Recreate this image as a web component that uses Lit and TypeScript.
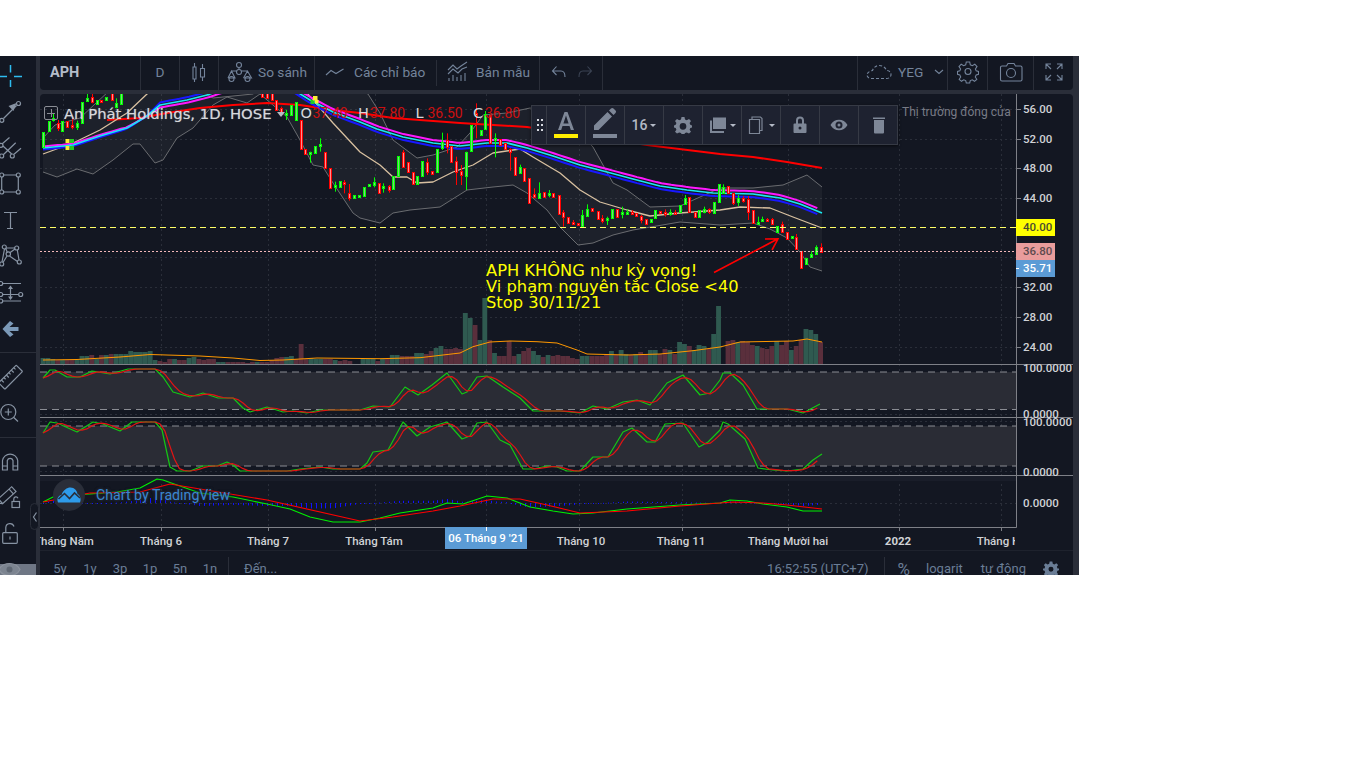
import { LitElement, css, html, svg } from "lit";
import { customElement } from "lit/decorators.js";

type Pt = [number, number];

// all chart data is in page pixels, the svg viewBox maps them 1:1
const STEP = 4.87;

// candles as colour + x,top,bottom[,wickTop,wickBottom], measured on 3x crops
const CANDLE_GROUPS: { ox: number; oy: number; rows: string }[] = [
  {
    ox: 0,
    oy: 50,
    rows:
      "g130,245,290 g146,212,242 g160,204,207,190,215 r175,218,235,210,243 g187,212,242 r202,212,230 r217,225,232,205,238 g232,220,232,212,240 g247,155,218 g262,145,152,132,155 r277,142,155,132,160 g290,150,162 r304,149,152 g319,140,150 r335,125,150 g349,158,172,145,175 g364,125,162 r785,120,140 r800,125,145 r815,130,150 r829,150,180 r843,175,185,170,195 g859,190,195,180,210 g873,165,195 g889,155,210 r904,210,298 r916,298,312 g931,306,310,305,338 g946,287,308 g961,283,286,265,305 r976,307,355 r991,355,415 g1006,406,410,395,425 g1019,393,410 r1033,395,403,390,430 r1048,428,445,402,452 g1063,435,445 g1077,435,440",
  },
  {
    ox: 360,
    oy: 50,
    rows:
      "g13,410,437 g27,403,407 g41,395,405,382,412 r56,400,428 g70,408,412,400,428 r86,408,420,405,428 g100,377,417 g115,317,377 r130,307,350,300,352 r143,335,365 r158,365,402 g172,378,403 g187,333,378 r202,335,365,325,375 r217,362,372 g232,298,367 g245,275,293,248,300 r260,270,290,250,310 r274,288,335 r289,333,365,320,405 r304,362,375,345,405 g319,305,377,305,420 g334,225,302 r349,190,192,160,265 g362,240,255 g376,193,238,183,240 r391,195,278 g406,263,270,250,322 r421,268,285 r436,278,298 r451,297,305,295,362 r464,320,375 g479,352,368,344,370 r493,355,392 r508,385,460 r522,432,442,415,445 g538,430,443,397,445 r553,427,442 g566,430,436,420,442 r580,430,440 r596,435,492 r610,485,500,480,530 r625,500,518 r640,516,520,510,525 r655,518,525 g667,495,528,480,530 g682,478,497,463,500 r697,475,482 r713,482,508 r727,503,512,495,520 g742,505,509,500,525 g757,478,503 r770,477,502 g785,485,489,470,505 g800,485,489,478,495 r815,485,489,480,495 r829,490,497 r844,497,510,495,520 r859,507,522 g872,507,517 g886,480,505 r901,482,490 r916,485,489,478,500 g931,485,489,478,497 r946,485,489,480,493 g961,465,485 g974,445,463,435,465 r988,442,487 r1004,487,500 g1018,480,500 g1033,478,487,470,490 r1048,477,487,475,492 g1063,455,490 g1077,402,455",
  },
  {
    ox: 720,
    oy: 50,
    rows:
      "g10,410,428,403,430 r25,408,430 r40,430,458,430,465 g55,443,457,435,468 r70,443,453,438,458 r85,448,485,438,510 r100,480,518 g113,515,519,500,525 g127,508,512,500,514 r142,508,512,504,516 r157,508,522,504,524 g172,527,545 r187,522,545,515,548",
  },
  {
    ox: 720,
    oy: 230,
    rows:
      "r202,5,28 g215,18,25 r229,20,58,12,60 r244,62,115 g259,85,103 g274,72,82,64,84 g289,52,72,46,74 r304,50,65,40,68",
  },
];

// volume heights, negative is a down day
const VOLUME_GROUPS: { start: number; bars: number[] }[] = [
  {
    start: 43,
    bars: [6, 6, 5, -4, 4, -4, -4, 4, 8, 8, -9, 5, -9, 9, -10, 10, 10, 10, 13, 12, 12, 12, 13, 4, -3, -2, -5, 5, -4, -4, 6, 7, -5, -4, -5, -5, 2, 2, -2, -2, -2, -2, -1, -2, 2, -2, -2, -4, -6, -7, 7, 8, -5, -20, -5, 6, 5, 5, -5, -5, 4, -3, -4, -3],
  },
  {
    start: 363,
    bars: [5, 5, 5, -3, 5, -5, 9, 9, -8, -8, -8, 11, 11, -10, -13, 16, 18, -15, -15, -16, -15, 51, 46, -39, 24, 66, -24, 11, -8, -8, -23, -8, 10, -13, -16, 13, 9, -7, 9, -8, -9, -8, -8, -6, -5, 8, 8, -8, -8, -8, -10, 13, -9, 14, 10, -9, 10, -12, -10, 14, 14, -10, -15, 14, -10, 22, 20, -18, 14, 19, 18, -15, 30, 58],
  },
  {
    start: 728,
    bars: [-23, -24, 22, -23, -22, -19, 18, -16, -15, -18, 23, -19, -23, 14, -18, -24, 35, 34, 30, -22],
  },
];

const RIBBON: Pt[] = [[43, 148], [73, 145], [100, 136], [127, 128], [147, 116], [160, 105], [187, 100], [207, 95], [240, 84], [280, 84], [297, 92], [310, 100], [333, 112], [360, 122], [377, 129], [403, 137], [433, 143], [460, 146], [487, 143], [507, 143], [527, 148], [553, 156], [580, 165], [607, 172], [633, 179], [660, 186], [687, 190], [713, 193], [753, 194], [780, 198], [800, 204], [822, 213]];
const RIBBON_SPREAD: Pt[] = [[43, 1.5], [120, 1], [147, 0], [160, -2.5], [230, -3], [270, 0], [305, 3], [822, 3]];
const LONG_MA: Pt[] = [[107, 120], [140, 118], [167, 113], [200, 108], [233, 105], [267, 103], [300, 105], [333, 110], [360, 113], [393, 118], [460, 123], [527, 127], [647, 145], [720, 154], [753, 157], [787, 162], [822, 168]];
const BASIS: Pt[] = [[43, 154], [73, 143], [100, 130], [127, 113], [147, 94], [165, 80], [290, 80], [307, 93], [333, 123], [360, 152], [380, 165], [393, 177], [407, 177], [417, 183], [433, 182], [453, 172], [473, 165], [493, 153], [520, 149], [533, 157], [560, 173], [580, 190], [600, 202], [627, 210], [650, 216], [680, 213], [720, 210], [740, 207], [770, 208], [793, 217], [822, 228]];
const BB_UP: Pt[] = [[43, 138], [55, 125], [80, 118], [110, 90], [150, 60], [213, 98], [253, 94], [300, 60], [368, 94], [380, 113], [393, 140], [417, 158], [433, 155], [457, 147], [470, 133], [483, 115], [507, 113], [530, 108], [560, 112], [593, 147], [613, 183], [627, 190], [650, 207], [680, 206], [720, 188], [753, 188], [783, 185], [807, 175], [822, 187]];
const BB_LOW: Pt[] = [[43, 172], [57, 177], [77, 169], [93, 174], [113, 160], [133, 144], [140, 144], [155, 163], [163, 160], [177, 138], [193, 128], [213, 105], [227, 97], [247, 103], [260, 94], [287, 117], [300, 140], [313, 165], [323, 167], [333, 183], [353, 213], [360, 218], [380, 223], [393, 213], [410, 210], [440, 207], [467, 190], [493, 187], [513, 185], [527, 193], [547, 210], [560, 227], [578, 245], [593, 243], [613, 235], [633, 230], [680, 222], [720, 225], [753, 223], [770, 229], [787, 238], [800, 252], [810, 267], [822, 271]];
const VOL_MA: Pt[] = [[43, 360], [77, 359.5], [120, 357], [150, 354.5], [200, 356], [233, 358], [260, 360.5], [283, 360], [317, 358], [380, 358.7], [420, 357.7], [460, 353], [473, 346.7], [490, 342], [510, 341], [537, 341.7], [557, 343], [577, 350], [587, 354], [627, 355], [660, 354], [693, 350.7], [720, 347], [740, 342], [793, 341], [807, 339], [822, 342]];
const STOCH_A: Pt[] = [[43, 378], [50, 370], [55, 370], [67, 377], [80, 377], [92, 371], [110, 374], [128, 369], [155, 369], [163, 377], [173, 392], [190, 397], [203, 393], [218, 398], [233, 398], [243, 408], [250, 412], [267, 407], [283, 412], [293, 411], [307, 413], [320, 410], [360, 410], [373, 406], [390, 407], [405, 387], [418, 395], [432, 385], [447, 373], [462, 394], [467, 392], [477, 377], [487, 376], [503, 387], [520, 398], [533, 411], [560, 411], [580, 413], [593, 406], [607, 409], [623, 402], [637, 400], [650, 405], [667, 383], [683, 375], [700, 395], [710, 393], [720, 380], [723, 373], [730, 373], [743, 385], [757, 409], [787, 409], [803, 413], [820, 404]];
const STOCH_B: Pt[] = [[43, 433], [50, 422], [57, 423], [77, 432], [93, 422], [103, 424], [120, 431], [132, 422], [155, 422], [162, 430], [170, 467], [177, 471], [190, 471], [203, 466], [217, 466], [227, 462], [233, 465], [240, 471], [267, 471], [287, 471], [300, 469], [320, 467], [333, 469], [360, 469], [367, 463], [373, 452], [388, 450], [403, 422], [417, 436], [430, 427], [447, 422], [462, 439], [470, 436], [477, 423], [487, 422], [500, 440], [510, 445], [523, 469], [533, 469], [547, 466], [557, 467], [567, 471], [580, 471], [593, 457], [608, 457], [623, 432], [632, 428], [647, 442], [655, 442], [665, 424], [683, 423], [699, 447], [708, 442], [720, 430], [723, 422], [728, 424], [745, 439], [758, 468], [773, 470], [787, 471], [803, 469], [813, 460], [822, 454]];
const MACD: Pt[] = [[43, 502], [53, 497], [67, 495], [90, 494], [117, 492], [140, 488], [157, 479], [163, 480], [177, 485], [200, 493], [233, 497], [267, 504], [290, 509], [310, 517], [333, 522], [360, 522], [380, 518], [400, 513], [433, 508], [447, 503], [463, 504], [487, 496], [507, 498], [530, 507], [553, 511], [573, 514], [593, 513], [627, 509], [680, 505], [720, 503], [730, 500], [747, 501], [763, 504], [787, 507], [803, 511], [822, 511]];
const SIGNAL: Pt[] = [[43, 502], [90, 493], [140, 492], [170, 484], [200, 489], [267, 500], [360, 521], [393, 517], [433, 511], [460, 506], [493, 499], [520, 499], [547, 505], [580, 513], [627, 511], [680, 506], [720, 503], [733, 502], [763, 503], [787, 505], [822, 509]];

const line = (pts: Pt[]) => pts.map(([x, y]) => `${x.toFixed(1)},${y.toFixed(1)}`).join(" ");

const at = (pts: Pt[], x: number) => {
  if (x <= pts[0][0]) return pts[0][1];
  for (let i = 1; i < pts.length; i++) {
    if (x <= pts[i][0]) {
      const [x0, y0] = pts[i - 1];
      const [x1, y1] = pts[i];
      return y0 + ((y1 - y0) * (x - x0)) / (x1 - x0);
    }
  }
  return pts[pts.length - 1][1];
};

const samples = () => {
  const xs: number[] = [];
  for (let x = 43; x <= 822; x += STEP) xs.push(x);
  return xs;
};

// %D line of the stochastics: three bar average of %K
const lagged = (pts: Pt[]): Pt[] =>
  samples().map((x) => [x, (at(pts, x) + at(pts, x - STEP) + at(pts, x - 2 * STEP)) / 3]);

const ribbon = (sign: number): Pt[] => {
  const xs = samples();
  return xs.map((x) => [x, at(RIBBON, x) + sign * at(RIBBON_SPREAD, x)]);
};

const candles = () =>
  CANDLE_GROUPS.flatMap((group) =>
    group.rows.split(" ").map((row) => {
      const up = row[0] === "g";
      const n = row.slice(1).split(",").map(Number);
      const x = Math.round(group.ox + n[0] / 3) + 0.5;
      const top = Math.round(group.oy + n[1] / 3) + 0.5;
      const bottom = Math.round(group.oy + n[2] / 3) + 0.5;
      const wickTop = n.length > 3 ? group.oy + n[3] / 3 : top;
      const wickBottom = n.length > 3 ? group.oy + n[4] / 3 : bottom;
      const colour = up ? "#00ff00" : "#ff0000";
      return svg`<line x1=${x} x2=${x} y1=${wickTop} y2=${wickBottom} stroke=${colour}></line>
        <rect x=${x - 1} y=${top} width="2" height=${Math.max(bottom - top, 2)}
          fill=${up ? "#7fd07f" : "#ff8f8f"} stroke=${colour}></rect>`;
    })
  );

const volumes = () =>
  VOLUME_GROUPS.flatMap((group) =>
    group.bars.map((h, i) => {
      const size = Math.abs(h);
      return svg`<rect x=${group.start + i * STEP - 2.4} y=${364 - size} width=${STEP} height=${size}
        fill=${h > 0 ? "#2f5a50" : "#5a2f3c"}></rect>`;
    })
  );

const histogram = () =>
  samples().map((x) => {
    const h = (at(SIGNAL, x) - at(MACD, x)) * 0.75;
    const y = h > 0 ? 503 - h : 503;
    return svg`<rect x=${Math.round(x)} y=${y} width="1" height=${Math.max(Math.abs(h), 1)} fill="#1010ff"></rect>`;
  });

const V_GRID = [63, 161, 268, 375, 486, 579, 682, 788, 899, 1001];
const H_GRID = [109, 139, 168, 198, 257, 287, 317, 347, 414, 421, 471, 503];
const PRICES: [string, number][] = [["56.00", 109], ["52.00", 139], ["48.00", 168], ["44.00", 198], ["32.00", 287], ["28.00", 317], ["24.00", 347]];
const OSC_LABELS: [string, number][] = [["100.0000", 368], ["0.0000", 414], ["100.0000", 422], ["0.0000", 472], ["0.0000", 503]];
const MONTHS: [string, number][] = [["Tháng Năm", 64], ["Tháng 6", 161], ["Tháng 7", 268], ["Tháng Tám", 374], ["Tháng 10", 581], ["Tháng 11", 681], ["Tháng Mười hai", 788], ["2022", 898], ["Tháng Hai", 1003]];

@customElement("app-root")
export class AppRoot extends LitElement {
  private sideTool(body: unknown) {
    return html`<div class="tool"><svg width="36" height="36" viewBox="0 0 36 36">${body}</svg></div>`;
  }

  private renderSide() {
    return html`
      <div class="side">
        <div class="group first">
          ${this.sideTool(svg`<path class="cyan" d="M0 18.5h7M14 18.5h8M10.5 7v7.5M10.5 22v7"></path>`)}
          ${this.sideTool(svg`<path d="M3.5 24.5 16.5 11.5"></path><circle cx="18.5" cy="9.5" r="2"></circle><circle cx="1.8" cy="26.3" r="2"></circle><path class="solid" d="M16.5 9 8.5 12 13.5 17Z"></path>`)}
          ${this.sideTool(svg`<path d="M2 14 9.500 7.500M3 25 15.700 12.700M3 16 11.700 24M14 24.300 21 18.300"></path><circle cx="1" cy="15.300" r="2"></circle><circle cx="1.700" cy="26" r="2"></circle><circle cx="12.300" cy="26" r="2"></circle>`)}
          ${this.sideTool(svg`<path d="M3.700 9H16.300M3.700 26H16.300M1.700 11V24M18.300 11V24"></path><circle cx="1.700" cy="9" r="2"></circle><circle cx="18.300" cy="9" r="2"></circle><circle cx="1.700" cy="26" r="2"></circle><circle cx="18.300" cy="26" r="2"></circle>`)}
          ${this.sideTool(svg`<path d="M4 10.500H17M10.500 10.500V26.500M7 26.500H13"></path>`)}
          ${this.sideTool(svg`<path d="M4.500 11 2 24M5.800 10.500 7.300 14.500M15 11 9.800 14.800M17.300 12 19 22M9.500 18 17.500 23.500M7 18 3 24.500M15 10H6.500"></path><circle cx="4.300" cy="9" r="2"></circle><circle cx="16.700" cy="10" r="2"></circle><circle cx="8.300" cy="16" r="2.200"></circle><circle cx="1.700" cy="26" r="2"></circle><circle cx="19.300" cy="24" r="2"></circle>`)}
          ${this.sideTool(svg`<path d="M3 9.500H21M3 20.500H18.500M3 27H21M10.500 12.500V25"></path><path class="solid" d="M10.500 11.500 13 15H8ZM10.500 26 13 22.500H8Z"></path><circle cx="0.700" cy="9.500" r="2"></circle><circle cx="0.700" cy="20.500" r="2"></circle><circle cx="0.700" cy="27" r="2"></circle><circle cx="20.700" cy="20.500" r="2"></circle>`)}
          ${this.sideTool(svg`<path class="back" d="M2.500 19 10 11 13.500 13.500 9.500 17H18.500V21H9.500L13.500 24.500 10 27Z"></path>`)}
        </div>
        <div class="group">
          ${this.sideTool(svg`<g transform="rotate(-45 10.700 19)"><rect x="-2" y="14.500" width="25" height="9" rx="1"></rect><path d="M2 14.500V18M5.500 14.500V17M9 14.500V18M12.500 14.500V17M16 14.500V18M19.500 14.500V17"></path></g>`)}
          ${this.sideTool(svg`<circle cx="8.300" cy="18" r="7.500"></circle><path d="M8.300 14.500V21.500M4.800 18H11.800M13.800 23.500 18 27.500"></path>`)}
        </div>
        <div class="group">
          ${this.sideTool(svg`<path d="M2.500 27V17.500A7.700 7.700 0 0 1 17.700 17.500V27H13V17.500A3 3 0 0 0 7.300 17.500V27ZM2.500 23H7.300M13 23H17.700"></path>`)}
          ${this.sideTool(svg`<g transform="rotate(-42 7 16)"><rect x="-2" y="13" width="18" height="6.500"></rect><path d="M12.500 13V19.500M-2 13-5 16.200-2 19.500"></path></g><rect x="12" y="22.500" width="7.500" height="6"></rect><path d="M13.800 22.500V20A2.200 2.200 0 0 1 18 19.200"></path>`)}
          ${this.sideTool(svg`<rect x="2.700" y="17.700" width="14.600" height="10.600" rx="1"></rect><path d="M5.800 17.700V12.500A4.200 4.200 0 0 1 14 11.500M10 21.500V24.500"></path>`)}
          ${this.sideTool(svg`<rect x="0" y="13" width="36" height="23" class="eye-back"></rect><path class="eye" d="M-1 18.500C3 10.500 16 10.500 20 18.500 16 26.500 3 26.500-1 18.500Z"></path><circle class="eye-ball" cx="9.500" cy="18.500" r="3"></circle>`)}
        </div>
      </div>
    `;
  }

  private renderTopbar() {
    return html`
      <div class="topbar">
        <div class="cell symbol">APH</div>
        <div class="cell interval">D</div>
        <div class="cell chart-type">
          <svg width="20" height="24" viewBox="0 0 20 24">
            <path d="M5.500 3V6.500M5.500 19.500V22M4 7H7V19H4ZM13.500 4V8M13.500 17V21M11.500 8.500H15.500V17H11.500Z"></path>
          </svg>
        </div>
        <div class="cell compare">
          <svg width="26" height="24" viewBox="0 0 26 24">
            <circle cx="12" cy="5" r="2.500"></circle><circle cx="12" cy="12" r="2.500"></circle>
            <circle cx="4.500" cy="19" r="2.500"></circle><circle cx="20.500" cy="19" r="2.500"></circle>
            <path d="M1 18 4.500 11 8 18H1M16.500 18 20.500 11 24.500 18H16.500M4.500 11H9.500M14.500 11H20.500M12 7.500V9.500"></path>
          </svg>
          <span>So sánh</span>
        </div>
        <div class="cell indicators">
          <svg width="20" height="24" viewBox="0 0 20 24"><path d="M1 15 6 10.500 11 13.500 18.500 9"></path></svg>
          <span>Các chỉ báo</span>
          <i class="short-rule"></i>
        </div>
        <div class="cell templates">
          <svg width="22" height="24" viewBox="0 0 22 24">
            <path d="M1 10 6 5 10 9 14 6 20 2M1 14 6 9 11 13 15 9 20 7M2 21V18M6 21V15M10 21V17M14 21V15M18 21V13"></path>
          </svg>
          <span>Bản mẫu</span>
        </div>
        <div class="cell history">
          <svg width="16" height="24" viewBox="0 0 16 24"><path d="M5.500 6.500 1.500 11 5.500 15M2 11H10C13 11 14 13 14 17"></path></svg>
          <svg class="dim" width="16" height="24" viewBox="0 0 16 24"><path d="M10.500 6.500 14.500 11 10.500 15M14 11H6C3 11 2 13 2 17"></path></svg>
        </div>
        <div class="spacer"></div>
        <div class="cell cloud">
          <svg width="26" height="24" viewBox="0 0 26 24">
            <path stroke-dasharray="3 2" d="M5 18.500H20.500C23.500 18.500 25 16.500 25 14.500 25 12 23 10.500 20.500 10.500 19.500 7.500 16.500 5.500 13.500 5.500 10 5.500 7.500 7.500 6.500 10.500 3.500 11 1 13 1 15 1 17 3 18.500 5 18.500Z"></path>
          </svg>
          <span>YEG</span>
          <svg class="chev" width="10" height="24" viewBox="0 0 10 24"><path d="M1 10 5 13.500 9 10"></path></svg>
        </div>
        <div class="cell icon gear">
          <svg width="22" height="24" viewBox="0 0 22 24">
            <circle cx="11" cy="11.500" r="3"></circle>
            <path d="M9.300 2H12.700L13.300 4.800 15.300 5.700 17.800 4.200 20 6.600 18.400 9 19.200 10.900 21.500 11.500V14.300L19.200 14.900 18.300 17 19.800 19.300 17.500 21.300 15.300 19.800 13.300 20.600 12.700 23H9.300L8.700 20.600 6.700 19.800 4.500 21.300 2.200 19.300 3.700 17 2.800 14.900 .5 14.300V11.500L2.800 10.900 3.600 9 2 6.600 4.200 4.200 6.700 5.700 8.700 4.800Z"></path>
          </svg>
        </div>
        <div class="cell icon camera">
          <svg width="24" height="24" viewBox="0 0 24 24">
            <path d="M3 6H7.500L9 3.500H15L16.500 6H21.500A1.500 1.500 0 0 1 23 7.500V19.500A1.500 1.500 0 0 1 21.500 21H3A1.500 1.500 0 0 1 1.500 19.500V7.500A1.500 1.500 0 0 1 3 6Z"></path>
            <circle cx="12" cy="13" r="4.500"></circle>
          </svg>
        </div>
        <div class="cell icon full">
          <svg width="20" height="24" viewBox="0 0 20 24">
            <path d="M2 9V4H7M2 4 7 9M13 4H18V9M18 4 13 9M2 15V20H7M2 20 7 15M13 20H18V15M18 20 13 15"></path>
          </svg>
        </div>
      </div>
    `;
  }

  private renderFloat() {
    return html`
      <div class="float">
        <div class="drag"><i></i><i></i><i></i><i></i><i></i><i></i></div>
        <div class="fcell">
          <svg width="26" height="36" viewBox="0 0 26 36">
            <path class="solid" d="M11.500 5H14.500L21 23H17.800L16.500 19H9.500L8.200 23H5ZM10.400 16.500H15.600L13 8.500Z"></path>
            <rect class="swatch-yellow" x="1" y="27" width="24" height="4"></rect>
          </svg>
        </div>
        <div class="fcell">
          <svg width="26" height="36" viewBox="0 0 26 36">
            <path class="solid" d="M2 23V18.500L15.500 5 20 9.500 6.500 23ZM17 3.500 19 1.500C19.800.8 20.800.8 21.500 1.500L23.500 3.500C24.200 4.200 24.200 5.200 23.500 6L21.500 8Z"></path>
            <rect class="solid" x="1" y="27" width="24" height="4"></rect>
          </svg>
        </div>
        <div class="fcell size">16<b class="caret"></b></div>
        <div class="fcell">
          <svg width="18" height="18" viewBox="0 0 18 18">
            <path class="solid" fill-rule="evenodd" d="M7.500 1H10.500L11 3.500 12.800 4.300 15 2.900 17 5 15.600 7.100 16.300 8.800 18 9.500V11.500L16.300 11.900 15.600 13.700 17 15.800 15 17.500 12.800 16.400 11 17 10.500 18H7.500L7 17 5.200 16.400 3 17.500 1 15.800 2.400 13.700 1.700 11.900 0 11.500V9.500L1.700 8.800 2.400 7.100 1 5 3 2.900 5.200 4.300 7 3.500ZM9 7A3.300 3.300 0 1 0 9 13.700 3.300 3.300 0 1 0 9 7Z"></path>
          </svg>
        </div>
        <div class="fcell">
          <svg width="18" height="18" viewBox="0 0 18 18">
            <path class="solid" d="M4 1.500H17V13H4ZM1 4.500H3V15H15V17H1Z"></path>
          </svg>
          <b class="caret"></b>
        </div>
        <div class="fcell">
          <svg class="thin" width="18" height="20" viewBox="0 0 18 20">
            <path d="M4 4.500V2H12.500L14 3.500V15.500H12M1.500 4.500H11.500V18.500H1.500Z"></path>
          </svg>
          <b class="caret"></b>
        </div>
        <div class="fcell">
          <svg width="14" height="18" viewBox="0 0 14 18">
            <path class="solid" fill-rule="evenodd" d="M3 7.500V4.500A4 4 0 0 1 11 4.500V7.500H12.500A1 1 0 0 1 13.500 8.500V16A1 1 0 0 1 12.500 17H1.500A1 1 0 0 1 .5 16V8.500A1 1 0 0 1 1.500 7.500ZM5 7.500H9V4.500A2 2 0 0 0 5 4.500ZM7 10.500A1.500 1.500 0 1 0 7 13.500 1.500 1.500 0 1 0 7 10.500Z"></path>
          </svg>
        </div>
        <div class="fcell">
          <svg width="18" height="12" viewBox="0 0 18 12">
            <path class="solid" fill-rule="evenodd" d="M.5 6C4 -1 14 -1 17.500 6 14 13 4 13 .5 6ZM9 2.500A3.500 3.500 0 1 0 9 9.500 3.500 3.500 0 1 0 9 2.500ZM9 4.500A1.500 1.500 0 1 1 9 7.500 1.500 1.500 0 1 1 9 4.500Z"></path>
          </svg>
        </div>
        <div class="fcell">
          <svg width="14" height="18" viewBox="0 0 14 18">
            <path class="solid" d="M1 1.500H13V3H1ZM2 4H12V16.500A1 1 0 0 1 11 17.500H3A1 1 0 0 1 2 16.500Z"></path>
          </svg>
        </div>
      </div>
    `;
  }

  private renderPlot() {
    const bandA = lagged(STOCH_A);
    const bandB = lagged(STOCH_B);
    const bollinger = [...BB_UP, ...[...BB_LOW].reverse()];
    return html`
      <svg class="canvas" width="1033" height="457" viewBox="40 94 1033 457">
        <defs>
          <clipPath id="pane"><rect x="40" y="94" width="976" height="270"></rect></clipPath>
          <clipPath id="scale"><rect x="40" y="527" width="975" height="24"></rect></clipPath>
        </defs>

        <g class="grid">
          ${V_GRID.map((x) => svg`<line x1=${x + 0.5} x2=${x + 0.5} y1="94" y2="527"></line>`)}
          ${H_GRID.map((y) => svg`<line x1="40" x2="1016" y1=${y + 0.5} y2=${y + 0.5}></line>`)}
        </g>

        <g clip-path="url(#pane)">
          <polygon points=${line(bollinger)} class="bb-fill"></polygon>
          <polyline points=${line(BB_UP)} class="ln bb"></polyline>
          <polyline points=${line(BB_LOW)} class="ln bb"></polyline>
          ${volumes()}
          <polyline points=${line(VOL_MA)} class="ln vol-ma"></polyline>
          <polyline points=${line(LONG_MA)} class="ln long-ma"></polyline>
          <polyline points=${line(BASIS)} class="ln basis"></polyline>
          <polyline points=${line(ribbon(1))} class="ln ribbon-blue"></polyline>
          <polyline points=${line(ribbon(-1))} class="ln ribbon-magenta"></polyline>
          <polyline points=${line(RIBBON)} class="ln ribbon-cyan"></polyline>
          <rect x="70" y="139" width="4" height="4" class="mark-g"></rect>
          <rect x="70" y="146" width="4" height="4" class="mark-g"></rect>
          <rect x="65.500" y="139" width="4" height="4" class="mark-y"></rect>
          <rect x="65.500" y="146" width="4" height="4" class="mark-y"></rect>
          <rect x="310.500" y="100" width="4" height="4" class="mark-g"></rect>
          <rect x="313" y="96" width="4.500" height="4.500" class="mark-y"></rect>
          <rect x="315" y="100" width="3.500" height="3.500" class="mark-y"></rect>
          <g class="candles">${candles()}</g>
        </g>

        <line x1="40" x2="1016" y1="227.500" y2="227.500" class="line-40"></line>
        <line x1="40" x2="1016" y1="251.500" y2="251.500" class="line-last"></line>

        <text class="note" x="486" y="276">APH KHÔNG như kỳ vọng!</text>
        <text class="note" x="486" y="292">Vi phạm nguyên tắc Close &lt;40</text>
        <text class="note" x="486" y="308">Stop 30/11/21</text>
        <path class="arrow" d="M714 272.500 778 238.800M765 239 778 238.800 772 250"></path>

        <!-- oscillator panes -->
        <rect x="40" y="372" width="976" height="37.500" class="band"></rect>
        <rect x="40" y="426" width="976" height="40" class="band"></rect>
        <rect x="40" y="476" width="976" height="5" class="seam"></rect>
        <g class="hband">
          ${[372, 409.5, 426, 466].map((y) => svg`<line x1="40" x2="1016" y1=${y} y2=${y}></line>`)}
        </g>
        <polyline points=${line(STOCH_A)} class="ln osc-green"></polyline>
        <polyline points=${line(bandA)} class="ln osc-red"></polyline>
        <polyline points=${line(STOCH_B)} class="ln osc-green"></polyline>
        <polyline points=${line(bandB)} class="ln osc-red"></polyline>
        ${histogram()}
        <polyline points=${line(MACD)} class="ln macd"></polyline>
        <polyline points=${line(SIGNAL)} class="ln signal"></polyline>

        <!-- pane separators and axes -->
        <g class="sep">
          <line x1="40" x2="1073" y1="364.500" y2="364.500"></line>
          <line x1="40" x2="1073" y1="417.500" y2="417.500"></line>
          <line x1="40" x2="1073" y1="475.500" y2="475.500"></line>
          <line x1="40" x2="1016.500" y1="527.500" y2="527.500"></line>
          <line x1="1016.500" x2="1016.500" y1="94" y2="527.500"></line>
        </g>
        <line x1="40" x2="1073" y1="551" y2="551" class="foot"></line>
        <g class="sep">
          ${V_GRID.filter((x) => x !== 486).map((x) => svg`<line x1=${x + 0.5} x2=${x + 0.5} y1="527" y2="531"></line>`)}
          ${PRICES.map(([, y]) => svg`<line x1="1016" x2="1021" y1=${y + 0.5} y2=${y + 0.5}></line>`)}
        </g>

        ${PRICES.map(([p, y]) => svg`<text class="axis" x="1023" y=${y + 3.5}>${p}</text>`)}
        ${OSC_LABELS.map(([p, y]) => svg`<text class="axis" x="1023" y=${y + 3.5}>${p}</text>`)}

        <rect x="1016" y="219" width="39" height="17" class="tag-yellow"></rect>
        <text class="axis on-yellow" x="1023" y="231">40.00</text>
        <rect x="1016" y="243" width="39" height="17" class="tag-pink"></rect>
        <text class="axis on-pink" x="1023" y="255">36.80</text>
        <rect x="1016" y="260" width="39" height="17" class="tag-blue"></rect>
        <rect x="1016" y="268" width="3" height="1" class="tick-white"></rect>
        <text class="axis on-blue" x="1023" y="272">35.71</text>

        <g clip-path="url(#scale)">
          ${MONTHS.map(
            ([m, x]) => svg`<text class="axis time ${m === "2022" ? "year" : ""}" x=${x} y="545">${m}</text>`
          )}
        </g>
        <rect x="445" y="527" width="82" height="22" class="tag-blue"></rect>
        <rect x="486" y="527" width="1" height="4" class="tick-white"></rect>
        <text class="axis on-blue time" x="486" y="542">06 Tháng 9 '21</text>
      </svg>

      <div class="legend">
        <span class="plus"></span>
        <span class="title">An Phát Holdings, 1D, HOSE</span>
        <b class="legend-caret"></b>
        <span class="k first-k">O</span><span class="v">37.40</span>
        <span class="k">H</span><span class="v">37.80</span>
        <span class="k">L</span><span class="v">36.50</span>
        <span class="k">C</span><span class="v">36.80</span>
      </div>
      <div class="market">Thị trường đóng cửa</div>
      ${this.renderFloat()}
      <div class="watermark">
        <span class="badge">
          <svg width="24" height="16" viewBox="0 0 24 16">
            <path class="cloud-fill" d="M1 15.500C-.5 12 1 8.500 4.500 8 6 3 10 .5 13.500 .5 17.500 .5 20 3.500 20.500 7 23 8 24.500 12 23 15.500Z"></path>
            <path class="cloud-line" d="M1.500 12 7.500 6.500 12.500 11.500 17.500 6 23 11"></path>
          </svg>
        </span>
        <span class="brand">Chart by TradingView</span>
      </div>
    `;
  }

  render() {
    return html`
      <div class="frame">
        ${this.renderSide()}
        <div class="main">
          ${this.renderTopbar()}
          <div class="chart">
            <div class="plot">${this.renderPlot()}</div>
            <div class="range">
              <span class="r">5y</span><span class="r">1y</span><span class="r">3p</span>
              <span class="r">1p</span><span class="r">5n</span><span class="r">1n</span>
              <span class="goto">Đến...</span>
              <span class="spacer"></span>
              <span class="clock">16:52:55 (UTC+7)</span>
              <span class="pct">%</span>
              <span class="log">logarit</span>
              <span class="auto">tự động</span>
              <svg class="range-gear" width="16" height="16" viewBox="0 0 18 18">
                <path fill-rule="evenodd" d="M7.500 .5H10.500L11 3 12.800 3.800 15 2.400 17 4.500 15.600 6.600 16.300 8.300 18 8.500V10.500L16.300 11 15.600 12.700 17 14.800 15 16.500 12.800 15.400 11 16 10.500 18H7.500L7 16 5.200 15.400 3 16.500 1 14.800 2.400 12.700 1.700 11 0 10.500V8.500L1.700 8.300 2.400 6.600 1 4.500 3 2.400 5.200 3.800 7 3ZM9 6.500A2.800 2.800 0 1 0 9 12.100 2.800 2.800 0 1 0 9 6.500Z"></path>
              </svg>
            </div>
          </div>
        </div>
        <div class="handle">
          <svg width="6" height="12" viewBox="0 0 6 12"><path d="M4.500 1.500 1.500 6 4.500 10.500"></path></svg>
        </div>
      </div>
    `;
  }

  static styles = css`
    :host {
      display: block;
      width: 1366px;
      height: 768px;
      background: #ffffff;
      overflow: hidden;
      font-family: Roboto, "Liberation Sans", sans-serif;
    }

    * {
      box-sizing: border-box;
    }

    svg {
      display: block;
      flex: none;
    }

    .frame {
      position: relative;
      display: flex;
      width: 1079px;
      height: 519px;
      margin-top: 56px;
      background: #2a2e39;
      overflow: hidden;
    }

    /* left drawing tools */
    .side {
      width: 36px;
      height: 519px;
      flex: none;
      background: #131722;
      overflow: hidden;
    }

    .group {
      padding-top: 5px;
      border-top: 1px solid #2a2e39;
      height: 85px;
    }

    .group.first {
      height: 296px;
      padding-top: 2px;
      border-top: 0;
    }

    .group:last-child {
      height: 138px;
    }

    .tool {
      height: 36px;
    }

    .tool svg {
      fill: none;
      stroke: #8793a3;
      stroke-width: 1.2;
      overflow: hidden;
    }

    .tool .cyan {
      stroke: #2ebcf0;
      stroke-width: 1.5;
    }

    .tool .solid {
      fill: #8793a3;
      stroke: none;
    }

    .tool .back {
      fill: #7b99b8;
      stroke: none;
    }

    .tool .eye-back {
      fill: #6f7785;
      stroke: none;
    }

    .tool .eye {
      fill: #7c8490;
      stroke: #8b929d;
    }

    .tool .eye-ball {
      fill: #5f6773;
      stroke: none;
    }

    .main {
      flex: none;
      width: 1033px;
      margin-left: 4px;
      display: flex;
      flex-direction: column;
      gap: 4px;
    }

    /* header bar */
    .topbar {
      display: flex;
      height: 34px;
      flex: none;
      background: #131722;
      border-radius: 0 0 4px 4px;
      color: #74849b;
      font-size: 13.700px;
    }

    .cell {
      position: relative;
      display: flex;
      align-items: center;
      padding-bottom: 2px;
      border-right: 1px solid #2a2e39;
      white-space: nowrap;
    }

    .topbar svg {
      fill: none;
      stroke: #74849b;
      stroke-width: 1.1;
    }

    .topbar .spacer {
      flex: 1;
    }

    .symbol {
      width: 101px;
      padding-left: 10px;
      font-weight: 700;
      font-size: 14.500px;
      color: #b4bcc9;
    }

    .interval {
      width: 39px;
      justify-content: center;
    }

    .chart-type {
      width: 39px;
      justify-content: center;
    }

    .compare {
      width: 96px;
      padding-left: 8px;
      gap: 5px;
    }

    .indicators {
      width: 122px;
      padding-left: 10px;
      gap: 9px;
      border-right: 0;
    }

    .short-rule {
      position: absolute;
      right: 0;
      top: 4px;
      bottom: 4px;
      width: 1px;
      background: #2a2e39;
    }

    .templates {
      width: 103px;
      padding-left: 10px;
      gap: 7px;
    }

    .history {
      width: 63px;
      padding-left: 11px;
      gap: 10px;
    }

    .topbar svg.dim {
      stroke: #3a4252;
    }

    .cloud {
      width: 91px;
      padding-left: 8px;
      gap: 6px;
      border-left: 1px solid #2a2e39;
    }

    .topbar svg.chev {
      margin-left: 5px;
    }

    .icon {
      justify-content: center;
    }

    .gear {
      width: 40px;
    }

    .camera {
      width: 46px;
    }

    .full {
      width: 39px;
      border-right: 0;
    }

    .chart {
      flex: 1;
      display: flex;
      flex-direction: column;
      background: #131722;
      border-radius: 4px 4px 0 0;
      overflow: hidden;
    }

    .plot {
      position: relative;
      height: 457px;
      flex: none;
    }

    /* chart canvas */
    .grid line {
      stroke: #2a2e39;
      stroke-dasharray: 2 3;
    }

    .ln {
      fill: none;
      stroke-linejoin: round;
    }

    .bb-fill {
      fill: rgba(255, 255, 255, 0.045);
    }

    .bb {
      stroke: #6a6c70;
      stroke-width: 1;
    }

    .vol-ma {
      stroke: #ff9800;
      stroke-width: 1;
    }

    .long-ma {
      stroke: #ff0000;
      stroke-width: 2;
    }

    .basis {
      stroke: #d8c0a0;
      stroke-width: 1.300;
    }

    .ribbon-blue {
      stroke: #1818ff;
      stroke-width: 2;
    }

    .ribbon-magenta {
      stroke: #ff18ff;
      stroke-width: 2;
    }

    .ribbon-cyan {
      stroke: #18e8f0;
      stroke-width: 1.700;
    }

    .mark-y {
      fill: #ffee33;
    }

    .mark-g {
      fill: #22cc22;
    }

    .line-40 {
      stroke: #ffff66;
      stroke-dasharray: 6 4;
    }

    .line-last {
      stroke: #f2b8b8;
      stroke-dasharray: 2 2;
    }

    .note {
      font: 16.300px "DejaVu Sans", Verdana, sans-serif;
      fill: #ffff00;
    }

    .arrow {
      fill: none;
      stroke: #ff0000;
      stroke-width: 1.6;
    }

    .band {
      fill: #2a2c35;
    }

    .seam {
      fill: #191d29;
    }

    .hband line {
      stroke: #8a8c93;
      stroke-dasharray: 7 5;
    }

    .osc-green {
      stroke: #14c814;
      stroke-width: 1.2;
    }

    .osc-red {
      stroke: #e01414;
      stroke-width: 1.2;
    }

    .macd {
      stroke: #00f000;
      stroke-width: 1.1;
    }

    .signal {
      stroke: #ff0000;
      stroke-width: 1.1;
    }

    .sep line {
      stroke: #7e8087;
    }

    .foot {
      stroke: #2a2e39;
    }

    .axis {
      font: 500 11.500px Roboto, "Liberation Sans", sans-serif;
      fill: #d0d2d6;
    }

    .time {
      text-anchor: middle;
    }

    .time.year {
      font-weight: 700;
    }

    .tag-yellow {
      fill: #ffff00;
    }

    .tag-pink {
      fill: #e99c9c;
    }

    .tag-blue {
      fill: #5b9bd5;
    }

    .tick-white {
      fill: #ffffff;
    }

    .on-yellow {
      fill: #4a4a30;
    }

    .on-pink {
      fill: #5d4a4e;
    }

    .on-blue {
      fill: #ffffff;
    }

    /* overlays on the chart */
    .legend {
      position: absolute;
      left: 4px;
      top: 9px;
      display: flex;
      align-items: center;
      height: 20px;
      font-size: 14px;
      color: #d6d8dc;
      white-space: nowrap;
    }

    .plus {
      position: relative;
      width: 14px;
      height: 14px;
      margin-right: 6px;
      border: 1px solid #8a8d94;
      border-radius: 2px;
      background:
        linear-gradient(#8a8d94, #8a8d94) center / 8px 1px no-repeat,
        linear-gradient(#8a8d94, #8a8d94) center / 1px 8px no-repeat;
    }

    .title {
      font: 14.800px "DejaVu Sans", Verdana, sans-serif;
      text-shadow: 0 0 1px rgba(214, 216, 220, 0.6);
    }

    .legend-caret {
      width: 0;
      height: 0;
      margin: 2px 16px 0 5px;
      border: 4px solid transparent;
      border-top: 5px solid #b8bbc2;
      border-bottom: 0;
    }

    .k {
      width: 12px;
      margin-left: 10.500px;
      font: 14.500px "DejaVu Sans", Verdana, sans-serif;
    }

    .k.first-k {
      margin-left: 0;
    }

    .v {
      width: 35px;
      color: #cc1010;
    }

    .market {
      position: absolute;
      left: 862px;
      top: 11px;
      font-size: 12px;
      color: #787b86;
    }

    .float {
      position: absolute;
      left: 491px;
      top: 11px;
      display: flex;
      width: 367px;
      height: 40px;
      background: #1e2230;
      border: 1px solid #363a45;
      box-shadow: 0 1px 3px rgba(0, 0, 0, 0.6);
    }

    .drag {
      display: grid;
      grid-template-columns: 2px 2px;
      grid-auto-rows: 2px;
      gap: 3px 2px;
      width: 15px;
      flex: none;
      padding: 13px 0 0 5px;
      border-right: 1px solid #363a45;
    }

    .drag i {
      background: #d5d8df;
    }

    .fcell {
      display: flex;
      align-items: center;
      justify-content: center;
      gap: 3px;
      width: 39px;
      flex: none;
      border-right: 1px solid #363a45;
      color: #b4bac6;
      font-size: 14px;
      font-weight: 500;
    }

    .fcell:last-child {
      border-right: 0;
    }

    .fcell .solid {
      fill: #7e8797;
    }

    .fcell .swatch-yellow {
      fill: #ffee00;
    }

    .fcell .thin {
      fill: none;
      stroke: #7e8797;
      stroke-width: 1.2;
    }

    .caret {
      width: 0;
      height: 0;
      border: 3px solid transparent;
      border-top: 3px solid #b4bac6;
      border-bottom: 0;
    }

    .watermark {
      position: absolute;
      left: 13px;
      top: 385px;
      display: flex;
      align-items: center;
      gap: 11px;
    }

    .badge {
      display: flex;
      align-items: center;
      justify-content: center;
      width: 32px;
      height: 32px;
      border-radius: 50%;
      background: #2a2e39;
    }

    .cloud-fill {
      fill: #2e9bea;
    }

    .cloud-line {
      fill: none;
      stroke: #2a2e39;
      stroke-width: 1.600;
    }

    .brand {
      font-size: 14.200px;
      color: #3a86d0;
      text-shadow: 0 0 3px #2a2e39, 0 0 3px #2a2e39;
    }

    /* bottom range bar */
    .range {
      position: relative;
      display: flex;
      flex: 1;
      align-items: flex-start;
      height: 24px;
      padding-top: 9px;
      font-size: 13px;
      line-height: 18px;
      color: #6a7d96;
      white-space: nowrap;
    }

    .r {
      width: 30px;
      text-align: center;
    }

    .r:first-child {
      margin-left: 5px;
    }

    .goto {
      margin-left: 3px;
      margin-top: -3px;
      padding: 3px 0 0 15px;
      border-left: 1px solid #2a2e39;
    }

    .range .spacer {
      flex: 1;
    }

    .clock {
      margin-right: 15px;
    }

    .pct {
      margin-top: -3px;
      padding: 3px 0 0 13px;
      border-left: 1px solid #2a2e39;
      font-size: 17px;
    }

    .log {
      margin-left: 16px;
    }

    .auto {
      margin-left: 18px;
    }

    .range-gear {
      margin: 1px 14px 0 17px;
      fill: #6a7d96;
    }

    .handle {
      position: absolute;
      left: 30px;
      top: 447px;
      display: flex;
      align-items: center;
      justify-content: center;
      width: 9px;
      height: 27px;
      border: 1px solid #2a2e39;
      border-radius: 5px;
      background: #131722;
    }

    .handle svg {
      fill: none;
      stroke: #8793a3;
      stroke-width: 1.200;
    }
  `;
}

declare global {
  interface HTMLElementTagNameMap {
    "app-root": AppRoot;
  }
}
